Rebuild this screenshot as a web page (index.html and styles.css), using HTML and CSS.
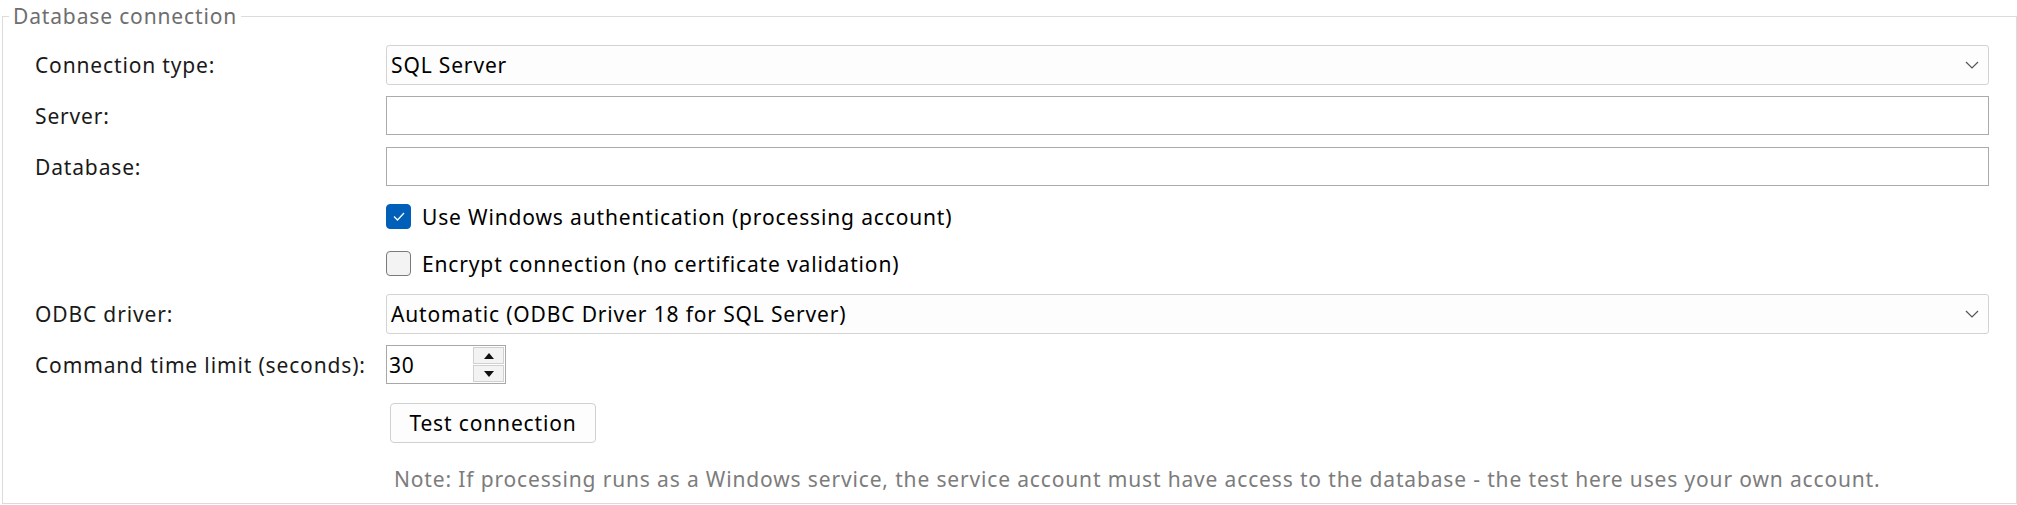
FILE: index.html
```html
<!DOCTYPE html>
<html lang="en">
<head>
    <meta charset="UTF-8">
    <meta name="viewport" content="width=device-width, initial-scale=1.0">
    <title>Database connection</title>
    <link rel="stylesheet" href="styles.css">
</head>
<body>
    <fieldset class="group">
        <legend>Database connection</legend>

        <div class="row first">
            <label class="label">Connection type:</label>
            <div class="combo">
                <span>SQL Server</span>
                <svg class="chevron" width="14" height="8" viewBox="0 0 14 8"><polyline points="1,1 7,7 13,1" fill="none" stroke="#555" stroke-width="1.2"/></svg>
            </div>
        </div>

        <div class="row server">
            <label class="label">Server:</label>
            <div class="textbox"></div>
        </div>

        <div class="row database">
            <label class="label">Database:</label>
            <div class="textbox"></div>
        </div>

        <div class="check-row windows-auth">
            <span class="checkbox checked">
                <svg width="12" height="9" viewBox="0 0 12 9"><polyline points="1,4.5 4.5,8 11,1" fill="none" stroke="#fff" stroke-width="1.3"/></svg>
            </span>
            <span>Use Windows authentication (processing account)</span>
        </div>

        <div class="check-row">
            <span class="checkbox"></span>
            <span>Encrypt connection (no certificate validation)</span>
        </div>

        <div class="row odbc">
            <label class="label">ODBC driver:</label>
            <div class="combo">
                <span>Automatic (ODBC Driver 18 for SQL Server)</span>
                <svg class="chevron" width="14" height="8" viewBox="0 0 14 8"><polyline points="1,1 7,7 13,1" fill="none" stroke="#555" stroke-width="1.2"/></svg>
            </div>
        </div>

        <div class="row timeout">
            <label class="label">Command time limit (seconds):</label>
            <div class="spin">
                <span class="spin-value">30</span>
                <div class="spin-buttons">
                    <span class="spin-btn"><svg width="10" height="6" viewBox="0 0 10 6"><polygon points="0,6 5,0 10,6" fill="#111"/></svg></span>
                    <span class="spin-btn"><svg width="10" height="6" viewBox="0 0 10 6"><polygon points="0,0 10,0 5,6" fill="#111"/></svg></span>
                </div>
            </div>
        </div>

        <button class="btn">Test connection</button>

        <p class="note">Note: If processing runs as a Windows service, the service account must have access to the database - the test here uses your own account.</p>
    </fieldset>
</body>
</html>
```

FILE: styles.css
```css
* {
    margin: 0;
    padding: 0;
    box-sizing: border-box;
    font-family: 'Noto Sans', sans-serif;
}
body {
    background-color: #fff;
    color: #1a1a1a;
    font-size: 21px;
    letter-spacing: 0.85px;
    line-height: 28px;
    padding: 3px 0 0 2px;
}
.group {
    border: 1px solid #dcdcdc;
    padding: 0 27px 10px 32px;
    min-width: 0;
}
.group legend {
    color: #6e6e6e;
    padding: 0 4px;
    margin-left: -26px;
    line-height: 26px;
}
.row {
    display: flex;
    align-items: center;
}
.row.first {
    margin-top: 16px;
}
.row.server {
    margin-top: 11px;
}
.row.database {
    margin-top: 12px;
}
.row.odbc {
    margin-top: 7px;
}
.row.timeout {
    margin-top: 11px;
}
.label {
    width: 351px;
    flex: none;
}
.combo {
    flex: 1;
    height: 40px;
    border: 1px solid #d3d3d3;
    border-radius: 3px;
    background-color: #fdfdfd;
    color: #000;
    display: flex;
    align-items: center;
    justify-content: space-between;
    padding: 0 9px 0 4px;
}
.textbox {
    flex: 1;
    height: 39px;
    border: 1px solid #ababab;
    background-color: #fff;
}
.check-row {
    display: flex;
    align-items: center;
    gap: 11px;
    height: 47px;
    padding-left: 351px;
    color: #000;
}
.check-row.windows-auth {
    margin-top: 7px;
}
.checkbox {
    width: 25px;
    height: 25px;
    border-radius: 4px;
    border: 1px solid #7a7a7a;
    background-color: #f3f3f3;
    display: flex;
    align-items: center;
    justify-content: center;
    flex: none;
}
.checkbox.checked {
    background-color: #005fb8;
    border-color: #005fb8;
}
.spin {
    width: 120px;
    height: 39px;
    border: 1px solid #a8a8a8;
    display: flex;
    align-items: center;
    padding: 1px;
    color: #000;
}
.spin-value {
    padding-left: 1px;
    flex: 1;
}
.spin-buttons {
    width: 31px;
    height: 100%;
    display: flex;
    flex-direction: column;
    gap: 1px;
}
.spin-btn {
    flex: 1;
    background-color: #f3f3f3;
    border: 1px solid #d0d0d0;
    display: flex;
    align-items: center;
    justify-content: center;
}
.btn {
    display: block;
    margin: 19px 0 0 355px;
    width: 206px;
    height: 40px;
    border: 1px solid #d0d0d0;
    border-radius: 4px;
    background-color: #fdfdfd;
    color: #000;
    font-size: 21px;
    letter-spacing: 0.85px;
}
.note {
    margin: 22px 0 0 359px;
    color: #7c7c7c;
}
```
